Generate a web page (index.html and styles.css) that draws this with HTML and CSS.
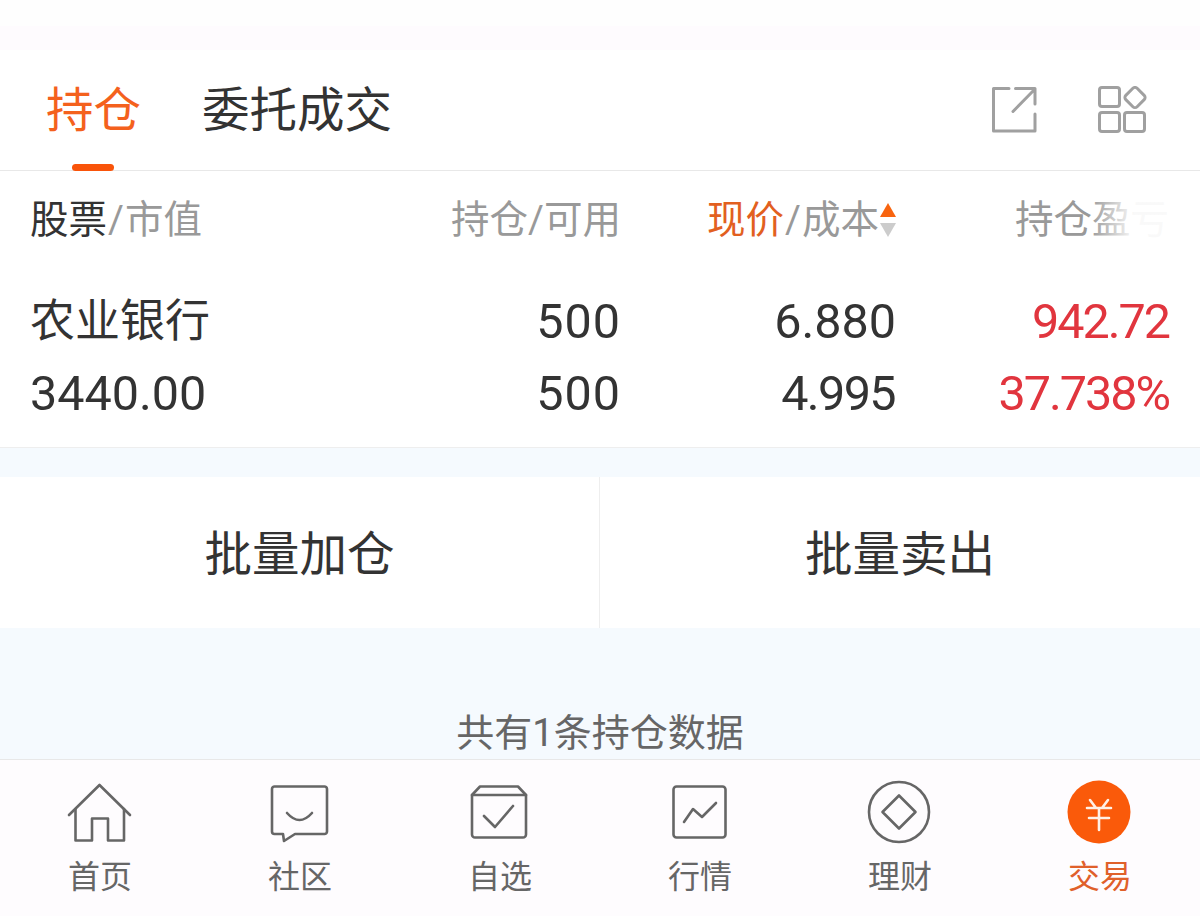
FILE: index.html
```html
<!DOCTYPE html>
<html lang="zh-CN">
<head>
<meta charset="utf-8">
<title>持仓</title>
<link rel="stylesheet" href="styles.css">
</head>
<body>
<div class="page">
  <div class="top-white"></div>
  <div class="top-tint"></div>
  <header class="tabs">
    <div class="tab-list">
      <div class="tab active">持仓</div>
      <div class="tab">委托成交</div>
    </div>
    <div class="tab-tools">
      <svg class="tool" width="46" height="48" viewBox="0 0 46 48" fill="none" stroke="#a0a0a0" stroke-width="3" stroke-linejoin="round" stroke-linecap="round">
        <path d="M17 2.500H1.500V45H43V28"/>
        <path d="M21 25.500L43 3M23.500 2.500H43V18"/>
      </svg>
      <svg class="tool" width="50" height="48" viewBox="0 0 50 48" fill="none" stroke="#a0a0a0" stroke-width="3" stroke-linejoin="round">
        <rect x="1.500" y="1.500" width="20" height="19" rx="2.500"/>
        <rect x="1.500" y="26.500" width="20" height="19" rx="2.500"/>
        <rect x="26.500" y="26.500" width="20" height="19" rx="2.500"/>
        <rect x="29" y="3.500" width="16" height="16" rx="3" transform="rotate(45 37 11.500)"/>
      </svg>
    </div>
    <span class="tab-bar-mark"></span>
  </header>

  <section class="holdings">
    <div class="row head">
      <div class="cell left"><span class="dark">股票</span><span class="sl">/</span>市值</div>
      <div class="cell">持仓/可用</div>
      <div class="cell sorted"><span class="hot">现价</span><span class="sl">/</span>成本<span class="sort"><i class="up"></i><i class="down"></i></span></div>
      <div class="cell last">持仓盈亏</div>
      <span class="fade"></span>
    </div>
    <div class="row body">
      <div class="cell left cjk">农业银行</div>
      <div class="cell wide">500</div>
      <div class="cell">6.880</div>
      <div class="cell red t1">942.72</div>
    </div>
    <div class="row body">
      <div class="cell left">3440.00</div>
      <div class="cell wide">500</div>
      <div class="cell t2">4.995</div>
      <div class="cell red t1">37.738%</div>
    </div>
  </section>

  <section class="actions">
    <div class="action">批量加仓</div>
    <div class="action">批量卖出</div>
  </section>

  <main class="rest">共有1条持仓数据</main>

  <nav class="nav">
    <div class="nav-item">
      <svg class="nav-icon" width="70" height="66" viewBox="0 0 70 66" fill="none" stroke="#666" stroke-width="2.600" stroke-linejoin="round" stroke-linecap="round">
        <path d="M4 35L34.500 5L65 35"/>
        <path d="M10.500 29V60.500H27V38.500H43V60.500H59V29"/>
      </svg>
      <span>首页</span>
    </div>
    <div class="nav-item">
      <svg class="nav-icon" width="70" height="66" viewBox="0 0 70 66" fill="none" stroke="#666" stroke-width="2.600" stroke-linejoin="round" stroke-linecap="round">
        <path d="M9.500 6.500H59.500A2.500 2.500 0 0 1 62 9V51.500A2.500 2.500 0 0 1 59.500 54H30L19 61L18 54H9.500A2.500 2.500 0 0 1 7 51.500V9A2.500 2.500 0 0 1 9.500 6.500Z"/>
        <path d="M22 33Q34.500 47 47 33"/>
      </svg>
      <span>社区</span>
    </div>
    <div class="nav-item">
      <svg class="nav-icon" width="70" height="66" viewBox="0 0 70 66" fill="none" stroke="#666" stroke-width="2.600" stroke-linejoin="round" stroke-linecap="round">
        <path d="M7 15L15 6.500H53L61 15V54.500A3 3 0 0 1 58 57.500H10A3 3 0 0 1 7 54.500Z"/>
        <path d="M7 15H61"/>
        <path d="M19 36L30 47L48 26"/>
      </svg>
      <span>自选</span>
    </div>
    <div class="nav-item">
      <svg class="nav-icon" width="70" height="66" viewBox="0 0 70 66" fill="none" stroke="#666" stroke-width="2.600" stroke-linejoin="round" stroke-linecap="round">
        <rect x="8.500" y="6.500" width="52" height="51" rx="3"/>
        <path d="M19 42L28 29L37 37L51 23"/>
      </svg>
      <span>行情</span>
    </div>
    <div class="nav-item">
      <svg class="nav-icon" width="70" height="66" viewBox="0 0 70 66" fill="none" stroke="#666" stroke-width="2.600" stroke-linejoin="round">
        <circle cx="34" cy="32" r="30"/>
        <path d="M34 15.500L50.500 32L34 48.500L17.500 32Z"/>
      </svg>
      <span>理财</span>
    </div>
    <div class="nav-item on">
      <svg class="nav-icon" width="70" height="66" viewBox="0 0 70 66" fill="none">
        <circle cx="34" cy="32" r="31.500" fill="#fa5a0a"/>
        <path d="M25 20L31 28M43 20L37 28M22 28H46M24 38H44M34 28V50" stroke="#fff0e6" stroke-width="2.600" stroke-linecap="round"/>
      </svg>
      <span>交易</span>
    </div>
  </nav>
</div>
</body>
</html>
```
FILE: styles.css
```css
* { box-sizing: border-box; }
html, body { margin: 0; padding: 0; }
body {
  background: #fff;
  font-family: Roboto, "Noto Sans CJK SC", "Noto Sans", sans-serif;
  color: #333;
}
.page {
  width: 1200px;
  height: 916px;
  display: flex;
  flex-direction: column;
  overflow: hidden;
  background: #f5fafe;
}
.top-white { height: 26px; background: #fefefe; }
.top-tint { height: 24px; background: #fefbfe; }

.tabs {
  position: relative;
  height: 121px;
  flex: none;
  padding: 0 52px 0 46px;
  display: flex;
  align-items: center;
  justify-content: space-between;
  background: #fff;
  border-bottom: 1px solid #e8e8e8;
}
.tab-list { display: flex; gap: 61px; margin-top: 2px; }
.tab { font-size: 47.500px; line-height: 64px; color: #333; }
.tab.active { color: #f4611d; }
.tab-tools { display: flex; align-items: center; gap: 60px; }
.tool { display: block; }
.tab-bar-mark {
  position: absolute;
  left: 72px;
  bottom: -1px;
  width: 42px;
  height: 7px;
  border-radius: 3.500px;
  background: #f9540a;
}

.holdings {
  flex: none;
  height: 277px;
  padding: 19px 0 0;
  background: #fff;
  border-bottom: 1px solid #eeeeee;
}
.row {
  position: relative;
  display: grid;
  grid-template-columns: 1fr repeat(3, 275px);
  padding: 0 29px 0 30px;
}
.cell { text-align: right; white-space: nowrap; }
.cell.left { text-align: left; }
.head { height: 60px; font-size: 38.500px; line-height: 60px; color: #999; margin-bottom: 36px; }
.dark { color: #333; }
.hot { color: #e2601f; }
.sl { padding: 0 1px; }
.last { padding-right: 2px; }
.sorted { display: flex; justify-content: flex-end; align-items: center; }
.sort {
  display: flex;
  flex-direction: column;
  gap: 6px;
  margin-left: 1px;
}
.sort i { display: block; width: 0; height: 0; border-left: 8.500px solid transparent; border-right: 8.500px solid transparent; }
.sort .up { border-bottom: 14px solid #f8640f; }
.sort .down { border-top: 14px solid #cccccc; }
.fade {
  position: absolute;
  right: 30px;
  top: 0;
  bottom: 0;
  width: 80px;
  background: linear-gradient(90deg, rgba(255,255,255,0), rgba(255,255,255,.94) 55%);
}
.body { height: 72px; font-size: 48.500px; line-height: 72px; color: #333; }
.cjk { font-size: 45px; }
.red { color: #e1353e; }
.wide { letter-spacing: 1px; }
.t1 { letter-spacing: -2px; padding-right: 2px; }
.t2 { letter-spacing: -1.600px; padding-right: 1px; }

.actions {
  flex: none;
  margin-top: 29px;
  height: 151px;
  display: grid;
  grid-template-columns: 1fr 1fr;
  background: #fff;
}
.action {
  display: flex;
  align-items: center;
  justify-content: center;
  font-size: 47.500px;
  padding-bottom: 4px;
  color: #333;
}
.action:first-child { border-right: 1px solid #eeeeee; }

.rest {
  flex: 1;
  min-height: 0;
  padding-top: 77px;
  text-align: center;
  font-size: 38px;
  line-height: 56px;
  color: #666;
}

.nav {
  flex: none;
  height: 157px;
  display: grid;
  grid-template-columns: repeat(6, 1fr);
  background: #fefcfe;
  border-top: 1px solid #e8e8e8;
  padding-top: 20px;
}
.nav-item {
  display: flex;
  flex-direction: column;
  align-items: center;
  font-size: 32px;
  line-height: 46px;
  color: #666;
}
.nav-icon { display: block; margin-bottom: 8px; }
.nav-item.on span { color: #e0602a; }
```
